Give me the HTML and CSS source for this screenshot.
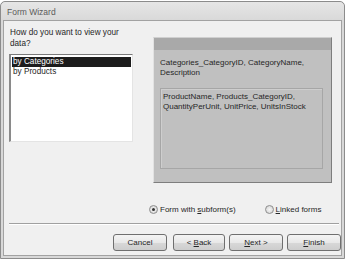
FILE: index.html
```html
<!DOCTYPE html>
<html lang="en">
<head>
  <meta charset="UTF-8">
  <title>Form Wizard</title>
  <link rel="stylesheet" href="styles.css">
</head>
<body>
  <div class="window">
    <div class="titlebar">Form Wizard</div>
    <div class="client">
      <div class="top">
        <div class="left_col">
          <p class="question">How do you want to view your<br>data?</p>
          <ul class="listbox">
            <li class="selected">by Categories</li>
            <li>by Products</li>
          </ul>
        </div>

        <!-- preview -->
        <div class="preview">
          <div class="preview_head"></div>
          <div class="preview_text">Categories_CategoryID, CategoryName,<br>Description</div>
          <div class="sub_box">ProductName, Products_CategoryID,<br>QuantityPerUnit, UnitPrice, UnitsInStock</div>
        </div>
      </div>

      <div class="radios">
        <label class="radio radio_on"><span class="dot"></span><span>Form with <u>s</u>ubform(s)</span></label>
        <label class="radio"><span class="dot"></span><span><u>L</u>inked forms</span></label>
      </div>

      <div class="separator"></div>

      <div class="buttons">
        <button class="btn">Cancel</button>
        <button class="btn btn_back">&lt; <u>B</u>ack</button>
        <button class="btn"><u>N</u>ext &gt;</button>
        <button class="btn"><u>F</u>inish</button>
      </div>
    </div>
  </div>
</body>
</html>
```

FILE: styles.css
```css
body {
  margin: 0;
  background: #fff;
  font-family: "Liberation Sans", Arial, sans-serif;
  font-size: 8px;
  color: #262626;
}
ul, p {
  margin: 0;
  padding: 0;
}
u {
  text-decoration: underline;
  text-underline-offset: 1px;
}

.window {
  width: 343px;
  height: 256px;
  margin-top: 1px;
  border: 1px solid #8c8c8c;
  border-radius: 5px 5px 0 0;
  background: #d8d8d8;
  display: flex;
  flex-direction: column;
}
.titlebar {
  height: 18px;
  padding-left: 6px;
  line-height: 21px;
  font-size: 8.5px;
  color: #5a5a5a;
  background: linear-gradient(#e6e6e6, #d9d9d9);
  border-radius: 5px 5px 0 0;
}
.client {
  flex: 1;
  margin: 0 2px 2px 2px;
  border: 1px solid #a2a2a2;
  background: #f0f0f0;
  display: flex;
  flex-direction: column;
}

.top {
  display: flex;
  padding-top: 6px;
}
.left_col {
  width: 124px;
  margin-left: 5px;
}
.question {
  padding-left: 1px;
  line-height: 11px;
  font-size: 8.2px;
}
.listbox {
  list-style: none;
  margin-top: 5px;
  height: 82px;
  padding: 2px 1px;
  background: #fff;
  border-top: 1px solid #7a7a7a;
  border-left: 2px solid #8a8a8a;
  border-right: 1px solid #e4e4e4;
  border-bottom: 1px solid #e4e4e4;
}
.listbox li {
  height: 10px;
  line-height: 10px;
  padding-left: 1px;
  font-size: 8.2px;
}
.listbox .selected {
  background: #1c1c1c;
  color: #fff;
}

.preview {
  width: 177px;
  height: 144px;
  margin: 10px 0 0 20px;
  background: #c0c0c0;
  border-top: 1px solid #d0d0d0;
  border-left: 1px solid #e2e2e2;
  border-right: 1px solid #7e7e7e;
  border-bottom: 1px solid #7e7e7e;
}
.preview_head {
  height: 12px;
  background: #a9a9a9;
}
.preview_text {
  padding: 8px 6px 0 6px;
  line-height: 10px;
  height: 30px;
}
.sub_box {
  margin: 0 8px 0 6px;
  height: 73px;
  padding: 3px 2px;
  line-height: 10px;
  border: 1px solid #a6a6a6;
  box-shadow: inset 1px 1px 0 #cecece;
}

.radios {
  display: flex;
  gap: 29px;
  margin: 21px 0 0 145px;
  height: 11px;
  align-items: center;
}
.radio {
  display: flex;
  align-items: center;
  gap: 2px;
}
.dot {
  width: 7px;
  height: 7px;
  border-radius: 50%;
  border: 1px solid #8e8e8e;
  background: radial-gradient(#f6f6f6, #cfcfcf);
  display: flex;
  align-items: center;
  justify-content: center;
}
.radio_on .dot::after {
  content: "";
  width: 3px;
  height: 3px;
  border-radius: 50%;
  background: #333;
}

.separator {
  margin: 8px 2px 0 5px;
  border-top: 1px solid #a0a0a0;
  border-bottom: 1px solid #fff;
}

.buttons {
  display: flex;
  justify-content: flex-end;
  gap: 4px;
  margin: 9px 0 0 0;
}
.btn {
  width: 54px;
  height: 17px;
  padding: 0;
  border: 1px solid #6f6f6f;
  border-radius: 3px;
  background: linear-gradient(#f4f4f4 0%, #e8e8e8 50%, #d8d8d8 51%, #cdcdcd 100%);
  font-family: "Liberation Sans", Arial, sans-serif;
  font-size: 8px;
  color: #262626;
}
.btn_back {
  margin-left: 2px;
  width: 52px;
}
```
